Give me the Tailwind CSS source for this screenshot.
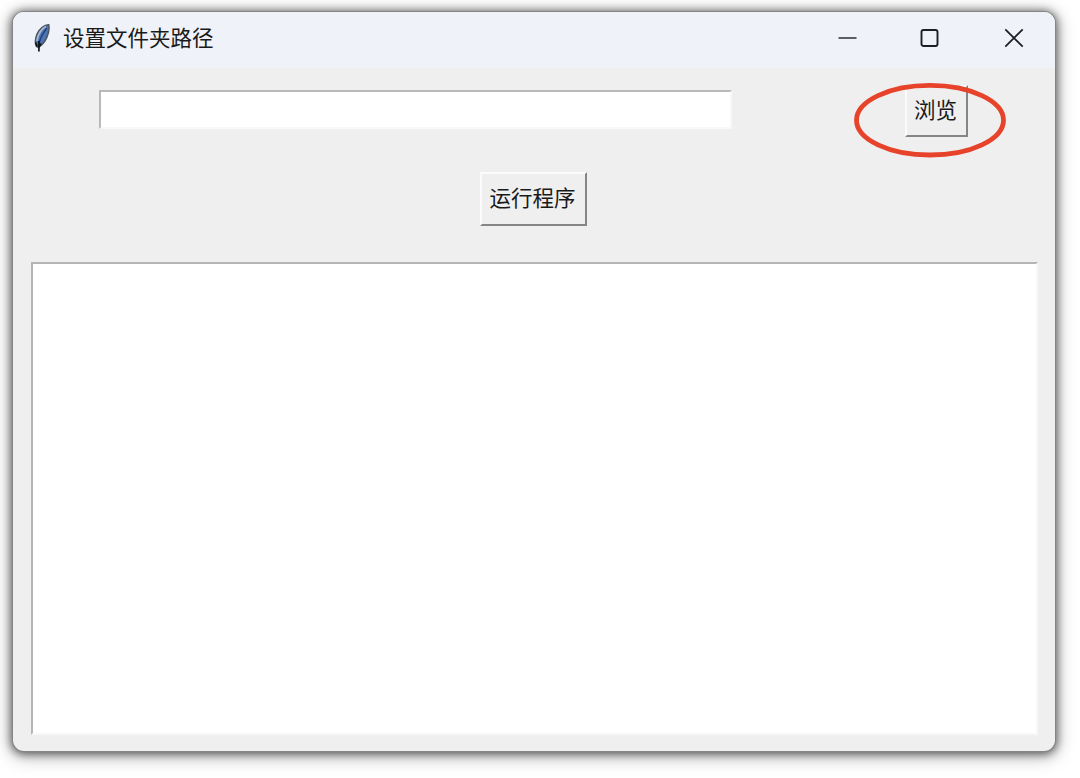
<!DOCTYPE html>
<html lang="zh-CN">
<head>
    <meta charset="UTF-8">
    <meta name="viewport" content="width=device-width, initial-scale=1.0">
    <title>设置文件夹路径</title>
    <script src="https://cdn.jsdelivr.net/npm/@tailwindcss/browser@4"></script>
</head>
<body class="h-screen overflow-hidden bg-white pt-3 pl-[13px] font-['Noto_Sans_CJK_SC',sans-serif] text-[#1a1a1a]">

    <!-- window -->
    <div class="flex flex-col w-[1042px] h-[739px] rounded-[11px] bg-[#efefef] shadow-[0_0_0_1px_#858585,0_1px_8px_2px_rgba(0,0,0,0.55),0_3px_18px_3px_rgba(0,0,0,0.28)]">

        <!-- title bar -->
        <header class="flex items-center h-14 shrink-0 rounded-t-[11px] bg-[#eff3f9] pb-1 pl-[19px] pr-[31px]">
            <svg class="w-[19px] h-[30px] mr-3" viewBox="0 0 19 30" fill="none">
                <path d="M16.800 1.800C12.500 1.600 7.500 5.500 5 11C3.200 15.500 2.800 20 4.300 23.500L6.500 24.500C11 21.500 15 15.500 16.500 9.500C17.200 6.500 17.400 4 16.800 1.800Z" fill="#4b74b6" stroke="#4d535d" stroke-width="1.400"/>
                <path d="M14 3.500C9.500 5.500 5.800 11.500 5 18" stroke="#aab9cd" stroke-width="1.800"/>
                <path d="M14.800 5C11 10 8 15.500 6.900 21" stroke="#243f70" stroke-width="1.300"/>
                <path d="M3.600 19.500L5.200 23.500M6.900 18V28.500M9 20.500L7 24" stroke="#10151c" stroke-width="1.700"/>
            </svg>
            <h1 class="text-[21.5px] leading-8 pb-0.5 whitespace-nowrap">设置文件夹路径</h1>
            <div class="flex items-center ml-auto text-[#1c1e22]">
                <svg class="w-5 h-5 mr-[62px]" viewBox="0 0 20 20" fill="none" stroke="currentColor" stroke-width="1.400">
                    <path d="M.5 10H18.500"/>
                </svg>
                <svg class="w-5 h-5 mr-16" viewBox="0 0 20 20" fill="none" stroke="currentColor" stroke-width="1.900">
                    <rect x="1.500" y="2" width="16" height="16" rx="2"/>
                </svg>
                <svg class="w-5 h-5" viewBox="0 0 20 20" fill="none" stroke="currentColor" stroke-width="1.700">
                    <path d="M1.300 1.300L18.700 18.700M18.700 1.300L1.300 18.700"/>
                </svg>
            </div>
        </header>

        <main class="flex flex-col grow pb-4">
            <!-- folder path -->
            <div class="flex items-start pl-[86px] pt-[17px]">
                <input type="text" class="w-[633px] h-[39px] mt-[5px] bg-white border-2 border-t-[#b9b9b9] border-l-[#b9b9b9] border-r-[#f8f8f8] border-b-[#f8f8f8] outline-none">
                <div class="relative ml-[173px]">
                    <button class="block w-[63px] h-[52px] bg-[#efefef] border-2 border-t-[#fbfbfb] border-l-[#fbfbfb] border-r-[#858585] border-b-[#858585] text-[21.5px] leading-[44px] pr-0.5 pb-1 whitespace-nowrap">浏览</button>
                    <!-- highlight ring -->
                    <svg class="absolute -left-[52px] -top-[3px] w-[154px] h-[77px] max-w-none pointer-events-none" viewBox="0 0 154 77" fill="none">
                        <ellipse cx="77" cy="38.200" rx="73.500" ry="34.800" stroke="#e7432b" stroke-width="4.800"/>
                    </svg>
                </div>
            </div>

            <button class="w-[107px] h-[54px] mt-[35px] ml-[467px] shrink-0 bg-[#efefef] border-2 border-t-[#fbfbfb] border-l-[#fbfbfb] border-r-[#858585] border-b-[#858585] text-[21.5px] leading-[46px] pr-0.5 pb-1 whitespace-nowrap">运行程序</button>

            <!-- output -->
            <textarea class="block grow mt-9 ml-[18px] mr-[17px] bg-white border-2 border-t-[#b5b5b5] border-l-[#b5b5b5] border-r-[#f8f8f8] border-b-[#f8f8f8] outline-none resize-none"></textarea>
        </main>
    </div>

</body>
</html>
